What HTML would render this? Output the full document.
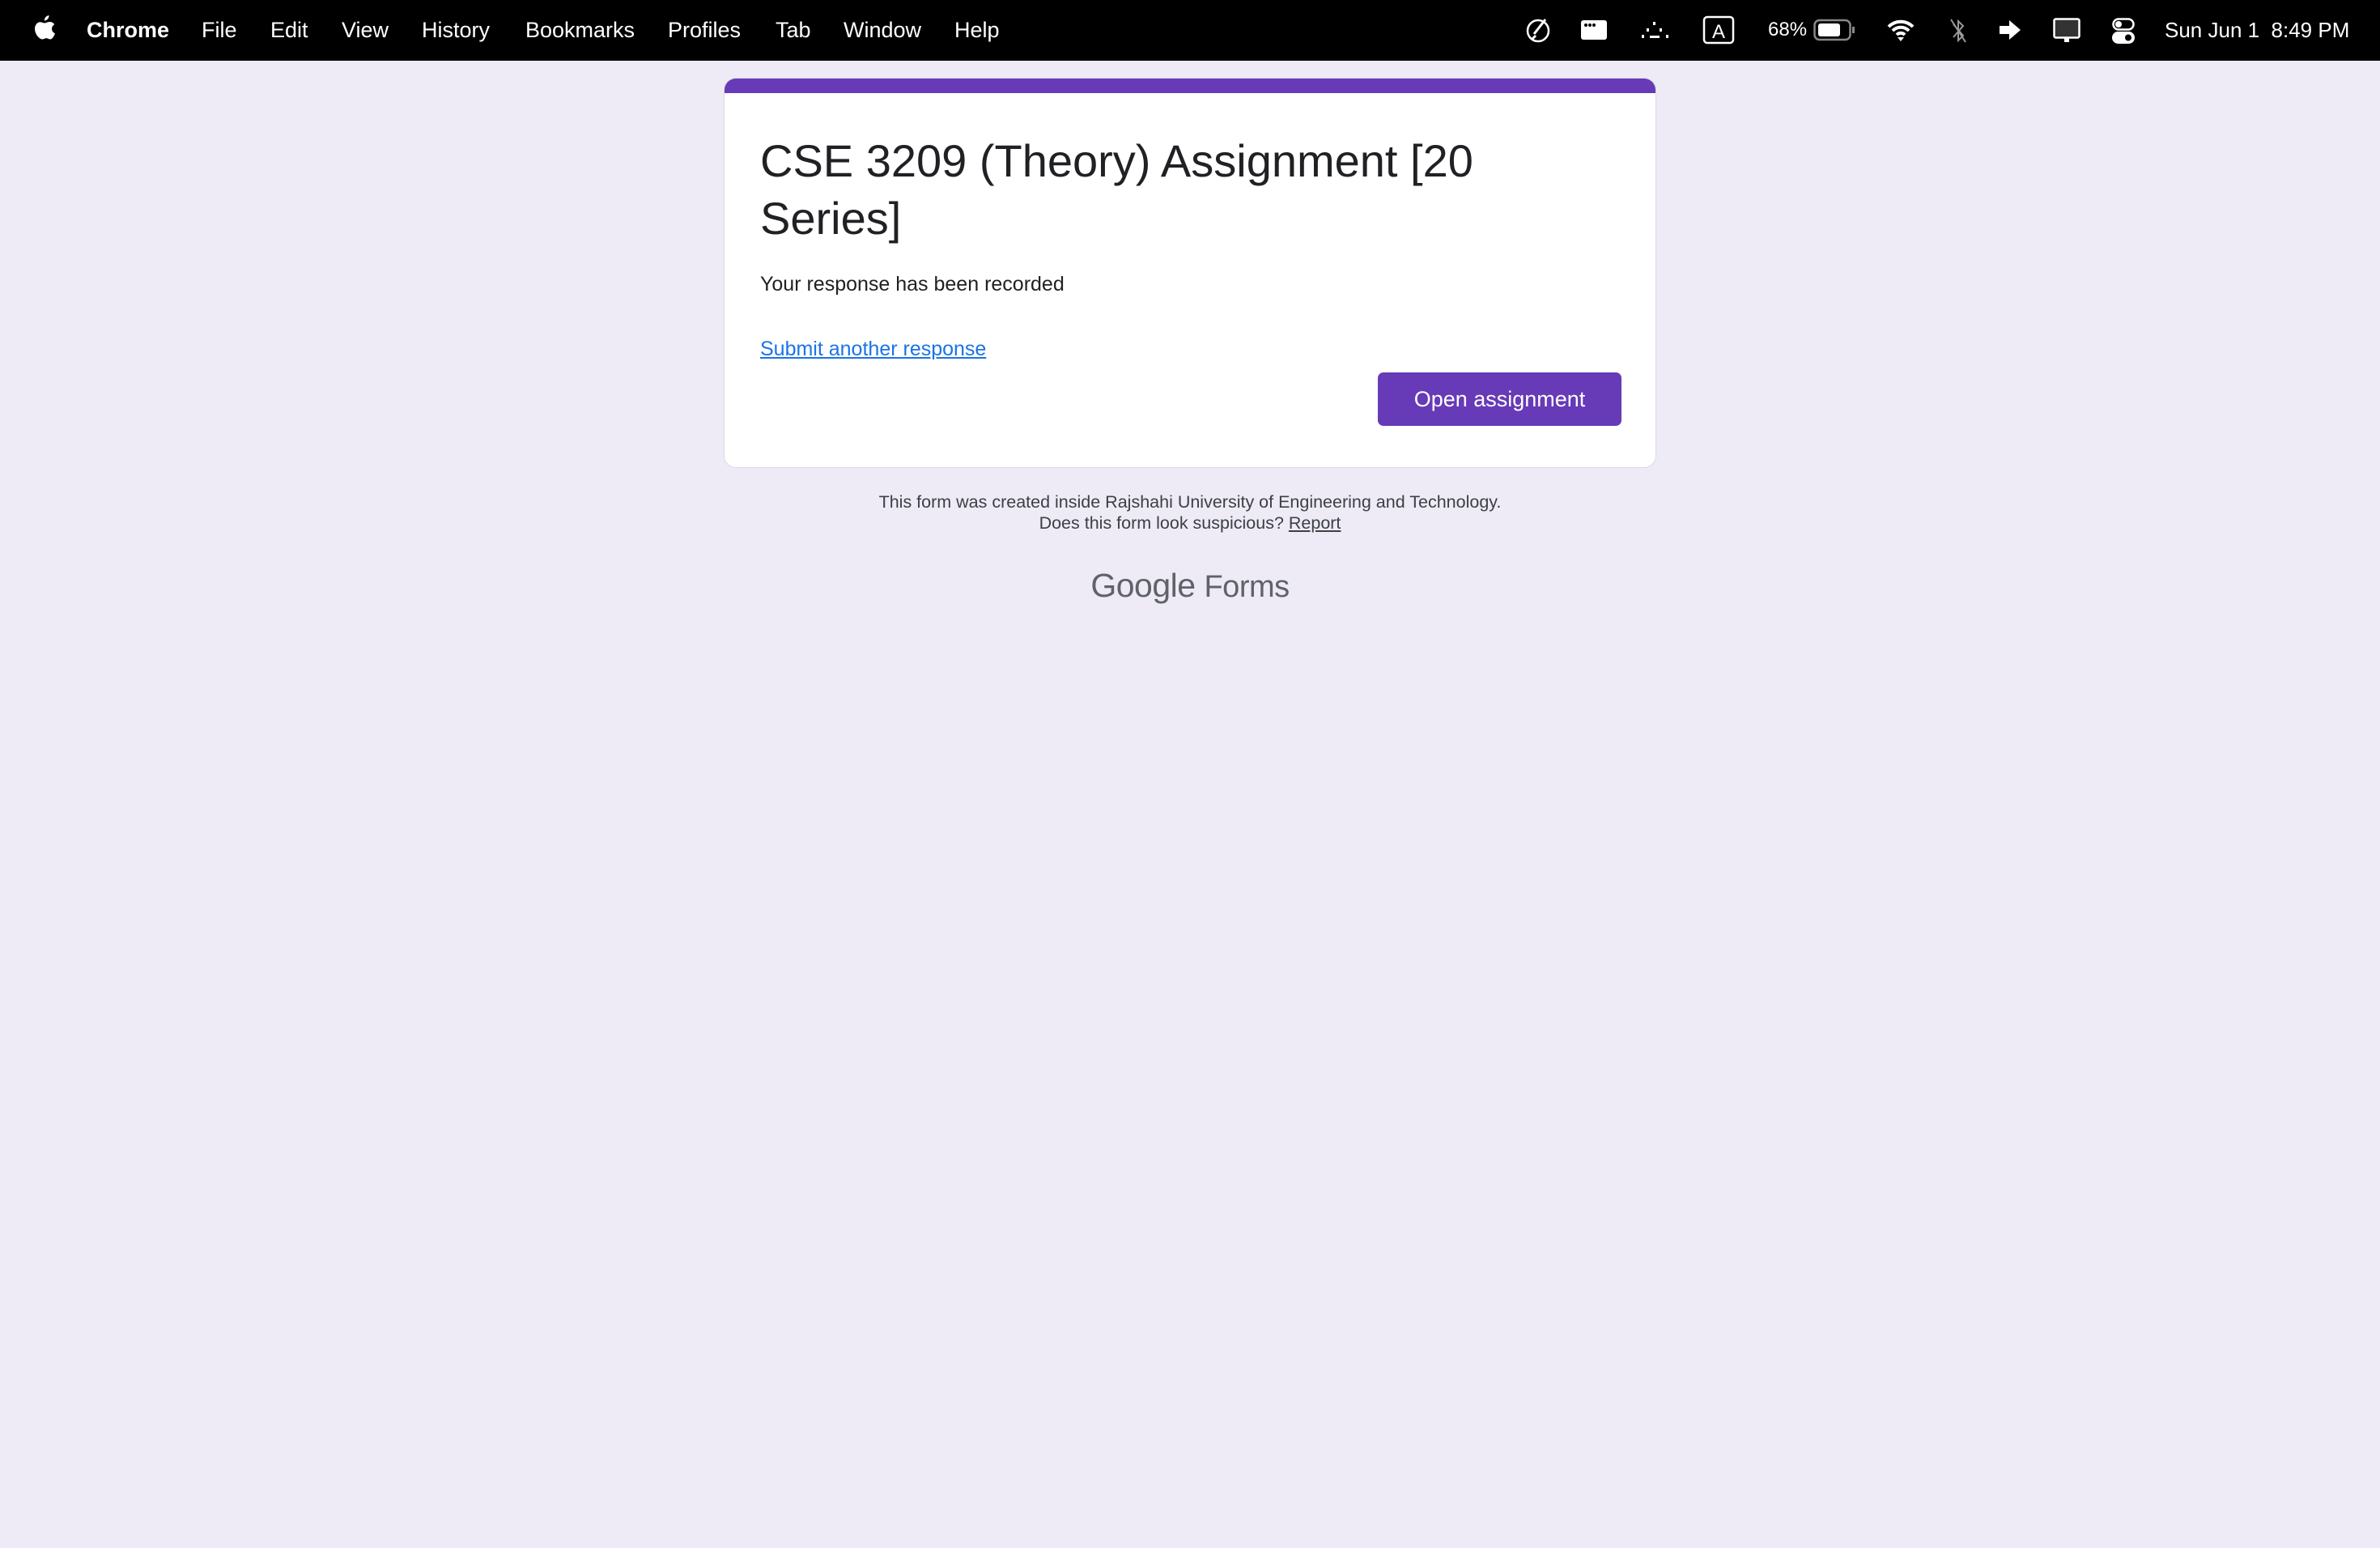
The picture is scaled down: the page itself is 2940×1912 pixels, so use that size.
<!DOCTYPE html>
<html><head><meta charset="utf-8"><style>
*{margin:0;padding:0;box-sizing:border-box}
body{width:2940px;height:1912px;background:#eeeaf6;font-family:"Liberation Sans",Arial,sans-serif;position:relative;overflow:hidden}
.bar{position:absolute;left:0;top:0;width:2940px;height:75px;background:#000;color:#fff}
.m{position:absolute;top:19px;font-size:27px;line-height:36px;color:#fff}
.ic{position:absolute;top:0}
.card{position:absolute;left:894px;top:96px;width:1152px;height:482px;background:#fff;border-radius:15px;border:1px solid #dadce0;overflow:hidden}
.card .top{height:18px;background:#673ab7}
.t{position:absolute;left:44px;top:66px;font-size:56px;line-height:71px;color:#202124;width:1000px}
.r{position:absolute;left:44px;top:240px;font-size:25px;color:#202124}
.l{position:absolute;left:44px;top:320px;font-size:25px;color:#1a73e8;text-decoration:underline}
.b{position:absolute;left:807px;top:363px;width:301px;height:66px;background:#673ab7;border-radius:7px;color:#fff;font-size:27px;line-height:66px;text-align:center}
.f{position:absolute;left:0;width:2940px;text-align:center;font-size:21.5px;color:#3c4043}
.g{position:absolute;left:0;top:700px;width:2940px;text-align:center;font-size:41px;color:#5f6368;letter-spacing:-0.5px}
</style></head><body>
<div class="bar">
<svg class="ic" style="left:40px;top:18px" width="30" height="36" viewBox="0 0 30 36"><path fill="#fff" d="M20.5 1c.3 3-2.400 6.500-5.600 6.500-.4-3 2.400-6.200 5.600-6.500z"/><path fill="#fff" d="M15 10.500c1.800 0 3.600-1.500 6.300-1.500 1.400 0 4.200.5 5.900 3.200-4.600 2.600-3.900 9.300.8 11-1 2.800-3.300 7.300-6 7.300-2 0-2.500-1.200-4.800-1.200s-3 1.200-4.800 1.200C8.500 30.500 3 24 3 17.500 3 12.500 6.300 9.200 9.600 9.200c2.300 0 3.800 1.300 5.400 1.300z"/></svg>
<div class="m" style="left:107px;font-weight:bold">Chrome</div>
<div class="m" style="left:249px">File</div>
<div class="m" style="left:334px">Edit</div>
<div class="m" style="left:422px">View</div>
<div class="m" style="left:521px">History</div>
<div class="m" style="left:649px">Bookmarks</div>
<div class="m" style="left:825px">Profiles</div>
<div class="m" style="left:958px">Tab</div>
<div class="m" style="left:1042px">Window</div>
<div class="m" style="left:1179px">Help</div>
<svg class="ic" style="left:1883px;top:20px" width="34" height="34" viewBox="0 0 34 34"><circle cx="17" cy="18" r="13" fill="none" stroke="#fff" stroke-width="2.5"/><path d="M26 4L12 22M14 24l-4 4" stroke="#fff" stroke-width="3" fill="none"/></svg>
<svg class="ic" style="left:1953px;top:23px" width="32" height="28"><rect x="0" y="2" width="32" height="24" rx="3" fill="#fff"/><circle cx="6" cy="8" r="2"/><circle cx="11" cy="8" r="2"/><circle cx="16" cy="8" r="2"/></svg>
<svg class="ic" style="left:2026px;top:25px" width="38" height="26"><g fill="#fff"><rect x="16" y="2" width="3" height="4"/><rect x="8" y="10" width="3" height="4"/><rect x="24" y="10" width="3" height="4"/><rect x="2" y="18" width="3" height="4"/><rect x="12" y="19" width="12" height="3"/><rect x="32" y="18" width="3" height="4"/></g></svg>
<svg class="ic" style="left:2103px;top:19px" width="40" height="36"><rect x="2" y="2" width="36" height="32" rx="4" fill="none" stroke="#fff" stroke-width="2.5"/><text x="20" y="28" font-size="24" fill="#fff" text-anchor="middle" font-family="Liberation Sans">A</text></svg>
<div class="m" style="left:2184px;font-size:24px">68%</div>
<svg class="ic" style="left:2240px;top:23px" width="52" height="28"><rect x="1.5" y="2" width="44" height="24" rx="6" fill="none" stroke="#888" stroke-width="2.5"/><rect x="6" y="6" width="27" height="16" rx="3" fill="#fff"/><rect x="48" y="10" width="3" height="8" fill="#888"/></svg>
<svg class="ic" style="left:2330px;top:22px" width="36" height="30" viewBox="0 0 36 30"><path d="M3 11a21 21 0 0 1 30 0M8 16a14 14 0 0 1 20 0M13 21a7 7 0 0 1 10 0" stroke="#fff" stroke-width="4" fill="none"/><path d="M14 24l4 5 4-5z" fill="#fff"/></svg>
<svg class="ic" style="left:2407px;top:22px" width="24" height="32"><path d="M6 8l12 14-6 6V4l6 6-12 14M3 2l18 28" stroke="#999" stroke-width="2" fill="none"/></svg>
<svg class="ic" style="left:2468px;top:24px" width="30" height="26"><path d="M2 8h12V1l14 12-14 12v-7H2z" fill="#fff"/></svg>
<svg class="ic" style="left:2536px;top:22px" width="34" height="32"><rect x="1.5" y="1.5" width="31" height="23" rx="2" fill="#333" stroke="#fff" stroke-width="2.5"/><rect x="14" y="25" width="6" height="5" fill="#fff"/></svg>
<svg class="ic" style="left:2609px;top:22px" width="28" height="32"><rect x="1.5" y="1.5" width="25" height="13" rx="6.5" fill="none" stroke="#fff" stroke-width="2.5"/><circle cx="8" cy="8" r="4" fill="#fff"/><rect x="0" y="17" width="28" height="15" rx="7.5" fill="#fff"/><circle cx="20" cy="24.5" r="4" fill="#000"/></svg>
<div class="m" style="left:2674px;font-size:26px">Sun Jun 1&nbsp;&nbsp;8:49 PM</div>
</div>
<div class="card"><div class="top"></div>
<div class="t">CSE 3209 (Theory) Assignment [20 Series]</div>
<div class="r">Your response has been recorded</div>
<div class="l">Submit another response</div>
<div class="b">Open assignment</div>
</div>
<div class="f" style="top:608px">This form was created inside Rajshahi University of Engineering and Technology.</div>
<div class="f" style="top:634px">Does this form look suspicious? <u>Report</u></div>
<div class="g">Google <span style="font-size:38px">Forms</span></div>
</body></html>
